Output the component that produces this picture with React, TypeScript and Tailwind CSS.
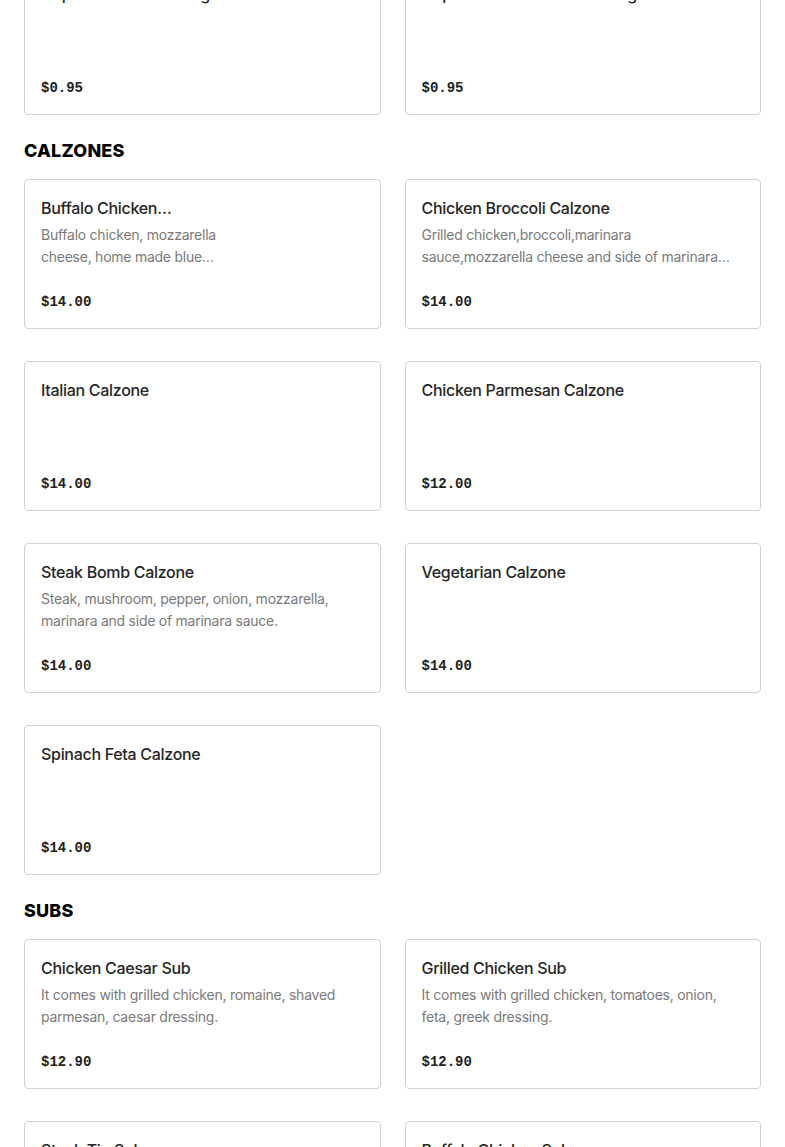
import React from "react";

type Item = { title: string; desc?: string; price: string; narrow?: boolean };

const Card = ({ item }: { item: Item }) => (
  <div className="flex h-[150px] flex-col rounded-[4px] border border-[#d3d3d3] bg-white px-4 pb-[14px] pt-4">
    <div className={item.narrow ? "w-[178px]" : ""}>
      <div className="line-clamp-1 text-[16px] font-medium leading-[24px] tracking-[-0.3px] text-[#262626]">
        {item.title}
      </div>
      {item.desc && (
        <div className="mt-[4px] line-clamp-2 text-[14px] leading-[22px] tracking-[-0.25px] text-[#7a7a7a]">
          {item.desc}
        </div>
      )}
    </div>
    <div
      className="mt-auto text-[14px] font-bold leading-[24px] text-[#222]"
      style={{ fontFamily: '"Liberation Mono", "DejaVu Sans Mono", monospace' }}
    >
      {item.price}
    </div>
  </div>
);

const Grid = ({ items }: { items: Item[] }) => (
  <div className="grid grid-cols-2 gap-x-6 gap-y-8">
    {items.map((it, i) => (
      <Card key={i} item={it} />
    ))}
  </div>
);

const Heading = ({ children }: { children: React.ReactNode }) => (
  <h2 className="mb-[14px] mt-[22px] text-[18px] font-extrabold uppercase leading-[28px] tracking-[0.2px] text-black">
    {children}
  </h2>
);

export default function App() {
  const top: Item[] = [
    { title: "Cup of Ranch Dressing", price: "$0.95" },
    { title: "Cup of Blue Cheese Dressing", price: "$0.95" },
  ];
  const calzones: Item[] = [
    {
      title: "Buffalo Chicken Calzone",
      desc: "Buffalo chicken, mozzarella cheese, home made blue cheese and side of marinara sauce.",
      price: "$14.00",
      narrow: true,
    },
    {
      title: "Chicken Broccoli Calzone",
      desc: "Grilled chicken,broccoli,marinara sauce,mozzarella cheese and side of marinara sauce.",
      price: "$14.00",
    },
    { title: "Italian Calzone", price: "$14.00" },
    { title: "Chicken Parmesan Calzone", price: "$12.00" },
    {
      title: "Steak Bomb Calzone",
      desc: "Steak, mushroom, pepper, onion, mozzarella, marinara and side of marinara sauce.",
      price: "$14.00",
    },
    { title: "Vegetarian Calzone", price: "$14.00" },
    { title: "Spinach Feta Calzone", price: "$14.00" },
  ];
  const subs: Item[] = [
    {
      title: "Chicken Caesar Sub",
      desc: "It comes with grilled chicken, romaine, shaved parmesan, caesar dressing.",
      price: "$12.90",
    },
    {
      title: "Grilled Chicken Sub",
      desc: "It comes with grilled chicken, tomatoes, onion, feta, greek dressing.",
      price: "$12.90",
    },
    { title: "Steak Tip Sub", desc: "Steak tips, lettuce, tomatoes, onion, cheese.", price: "$13.90" },
    { title: "Buffalo Chicken Sub", desc: "Buffalo chicken, lettuce, tomatoes, blue cheese.", price: "$12.90" },
  ];
  return (
    <div
      className="h-[1147px] overflow-hidden bg-white px-6"
      style={{ fontFamily: 'Inter, "Noto Sans", sans-serif' }}
    >
      <div className="-mt-[35px]">
        <Grid items={top} />
        <Heading>Calzones</Heading>
        <Grid items={calzones} />
        <Heading>Subs</Heading>
        <Grid items={subs} />
      </div>
    </div>
  );
}
